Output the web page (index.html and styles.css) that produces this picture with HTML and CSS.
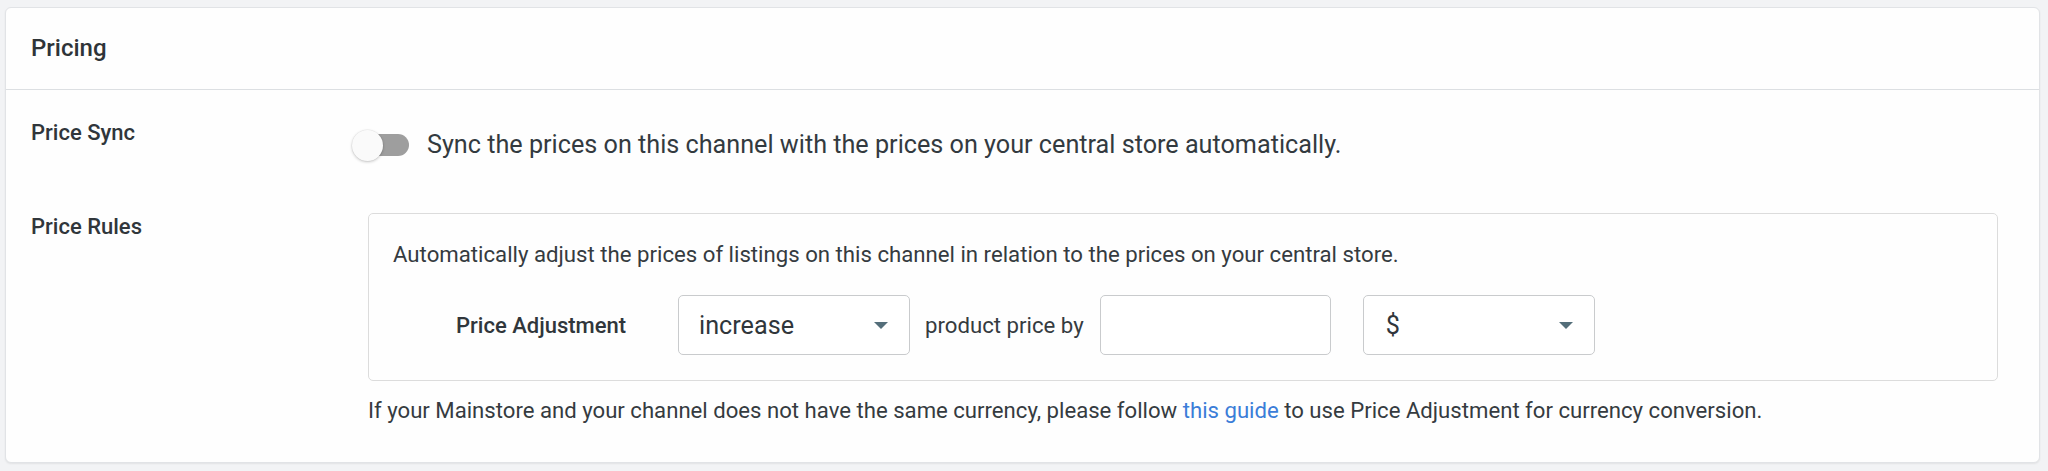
FILE: index.html
```html
<!DOCTYPE html>
<html lang="en">
<head>
<meta charset="utf-8">
<title>Pricing</title>
<link rel="stylesheet" href="styles.css">
</head>
<body>
<section class="card">
  <header class="card-header">
    <h2 class="card-title">Pricing</h2>
  </header>
  <div class="card-body">
    <div class="field-row">
      <div class="field-label">Price Sync</div>
      <div class="field-content sync-row">
        <span class="switch" role="switch" aria-checked="false"><span class="switch-knob"></span></span>
        <span class="sync-text">Sync the prices on this channel with the prices on your central store automatically.</span>
      </div>
    </div>
    <div class="field-row rules-row">
      <div class="field-label">Price Rules</div>
      <div class="field-content">
        <div class="rules-box">
          <p class="rules-desc">Automatically adjust the prices of listings on this channel in relation to the prices on your central store.</p>
          <div class="adjust-row">
            <span class="adjust-label">Price Adjustment</span>
            <div class="select">
              <span class="select-value">increase</span>
              <span class="caret"></span>
            </div>
            <span class="adjust-text">product price by</span>
            <div class="text-input"></div>
            <div class="select select-currency">
              <span class="select-value">$</span>
              <span class="caret"></span>
            </div>
          </div>
        </div>
        <p class="rules-note">If your Mainstore and your channel does not have the same currency, please follow <a class="link" href="#">this guide</a> to use Price Adjustment for currency conversion.</p>
      </div>
    </div>
  </div>
</section>
</body>
</html>
```
FILE: styles.css
```css
html, body {
  margin: 0;
  padding: 0;
}
body {
  background: #f2f3f5;
  font-family: Roboto, "Liberation Sans", sans-serif;
  color: #30363b;
  padding: 7px 8px 8px 5px;
  box-sizing: border-box;
  height: 471px;
}
.card {
  background: #fefefe;
  border: 1px solid #e1e3e6;
  border-radius: 6px;
  box-shadow: 0 1px 2px rgba(0, 0, 0, 0.07);
  height: 456px;
  box-sizing: border-box;
  overflow: hidden;
}
.card-header {
  height: 82px;
  box-sizing: border-box;
  border-bottom: 1px solid #dcdfe2;
  display: flex;
  align-items: center;
  padding: 0 25px 2px;
}
.card-title {
  margin: 0;
  font-size: 24px;
  font-weight: 500;
  color: #2e3438;
  line-height: 30px;
}
.card-body {
  padding: 28px 41px 0 25px;
}
.field-row {
  display: grid;
  grid-template-columns: 337px 1fr;
  align-items: start;
}
.rules-row {
  margin-top: 48px;
}
.field-label {
  font-size: 22px;
  font-weight: 500;
  line-height: 30px;
  color: #30363b;
}
.sync-row {
  display: flex;
  align-items: center;
  margin-top: 8px;
  height: 38px;
}
.switch {
  position: relative;
  width: 41px;
  height: 22px;
  border-radius: 11px;
  background: #9e9e9e;
  flex: none;
}
.switch-knob {
  position: absolute;
  left: -16px;
  top: -4.5px;
  width: 31px;
  height: 31px;
  border-radius: 50%;
  background: #fafafa;
  box-shadow: 0 1px 3px rgba(0, 0, 0, 0.22), 0 0 0 0.5px rgba(0, 0, 0, 0.06);
}
.sync-text {
  margin-left: 18px;
  font-size: 25.2px;
  line-height: 38px;
  color: #333a3f;
  white-space: nowrap;
}
.rules-box {
  margin-top: 1px;
  border: 1px solid #dcdcdc;
  border-radius: 5px;
  padding: 25px 24px 25px 24px;
}
.rules-desc {
  margin: 0;
  font-size: 22.2px;
  line-height: 30px;
  color: #353b40;
  white-space: nowrap;
}
.adjust-row {
  display: flex;
  align-items: center;
  margin-top: 26px;
}
.adjust-label {
  font-size: 22px;
  font-weight: 500;
  color: #30363b;
  margin-left: 63px;
  margin-right: 52px;
  white-space: nowrap;
}
.select {
  width: 232px;
  height: 60px;
  box-sizing: border-box;
  border: 1px solid #c9cbcd;
  border-radius: 5px;
  background: #fff;
  display: flex;
  align-items: center;
  justify-content: space-between;
  padding: 0 21px 0 20px;
}
.select-value {
  font-size: 25.2px;
  color: #30363b;
}
.caret {
  width: 0;
  height: 0;
  border-left: 7px solid transparent;
  border-right: 7px solid transparent;
  border-top: 7px solid #546e7a;
  margin-top: 1px;
}
.adjust-text {
  font-size: 22.2px;
  color: #353b40;
  margin: 0 16px 0 15px;
  white-space: nowrap;
}
.text-input {
  width: 231px;
  height: 60px;
  box-sizing: border-box;
  border: 1px solid #c9cbcd;
  border-radius: 5px;
  background: #fff;
}
.select-currency {
  margin-left: 32px;
  padding-left: 22px;
}
.rules-note {
  margin: 14px 0 0;
  font-size: 22.15px;
  line-height: 30px;
  color: #353b40;
  white-space: nowrap;
}
.link {
  color: #3b7dd8;
  text-decoration: none;
}
```
